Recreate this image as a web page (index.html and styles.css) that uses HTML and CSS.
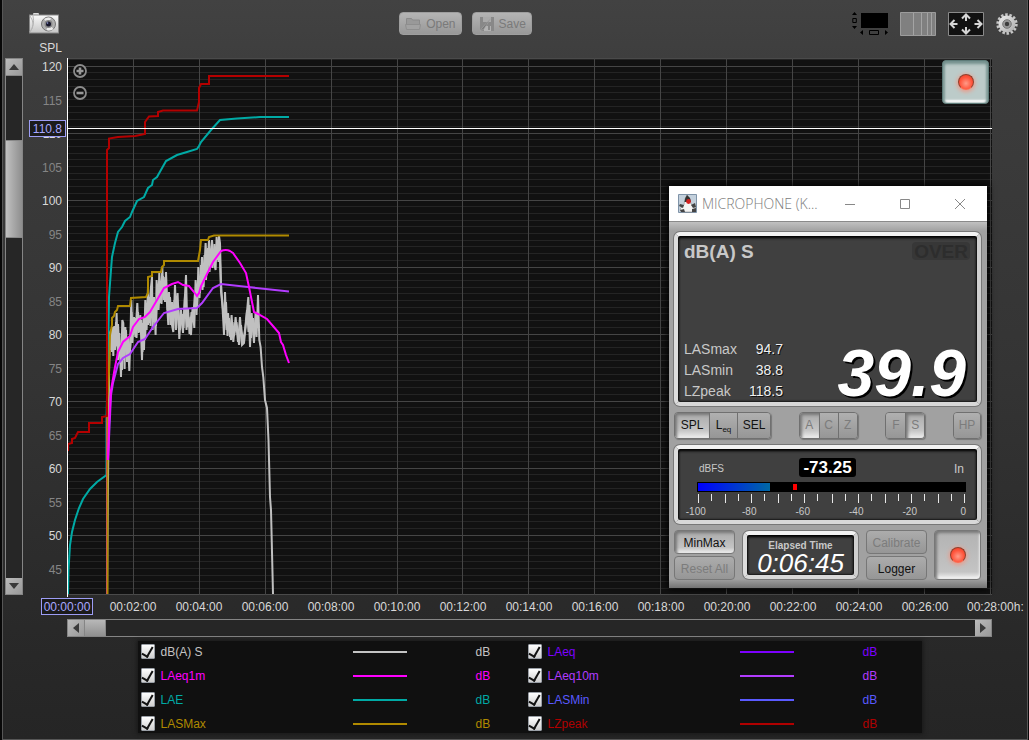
FILE: index.html
```html
<!DOCTYPE html>
<html lang="en">
<head>
<meta charset="utf-8">
<title>Sound level logger</title>
<link rel="stylesheet" href="styles.css">
</head>
<body>
<div class="app">
  <header class="toolbar">
    <button class="icon-btn" aria-label="Screenshot">
      <svg width="30" height="22" viewBox="0 0 30 22">
        <defs>
          <linearGradient id="cam" x1="0" y1="0" x2="0" y2="1"><stop offset="0" stop-color="#fafafa"/><stop offset="1" stop-color="#c4c4c4"/></linearGradient>
        </defs>
        <rect x="4" y="1" width="6" height="3" rx="1" fill="#ddd"/>
        <rect x=".5" y="3" width="29" height="18" fill="url(#cam)" stroke="#888"/>
        <path d="M1 4q6 8 0 16M4 4q2 9-3 16" fill="none" stroke="#b5b5b5"/>
        <circle cx="19.500" cy="12" r="7" fill="#b0b0b0" stroke="#777"/>
        <path d="M19.500 12L15 7a7 7 0 0 1 7-1zM19.500 12l5 5a7 7 0 0 1-7 1z" fill="#ececec"/>
        <circle cx="19.500" cy="12" r="4" fill="#888"/>
        <circle cx="19.500" cy="12" r="2.500" fill="#17172c"/>
        <circle cx="18.500" cy="11" r=".8" fill="#9aa4dd"/>
      </svg>
    </button>
    <span class="space-left"></span>
    <button class="file-btn" disabled>
      <svg width="16" height="14" viewBox="0 0 16 14"><path d="M1.500 7V1.500h5l1 1.500h7v4" fill="#999" stroke="#8a8a8a"/><path d="M.5 7.500h15l-1 5h-13z" fill="#a2a2a2" stroke="#8e8e8e"/></svg>
      Open
    </button>
    <button class="file-btn" disabled>
      <svg width="16" height="15" viewBox="0 0 16 15"><path d="M2 0h14v14H3l-1-1z" fill="#888"/><path d="M5 0h8v5H5z" fill="#aaa"/><path d="M6 9h7v5H6z" fill="#b2b2b2"/><path d="M10 9h2v4h-2z" fill="#888"/><path d="M13 1L4 11l-2 3 4-2z" fill="#777" stroke="#aaa" stroke-width=".6"/></svg>
      Save
    </button>
    <span class="space-right"></span>
    <button class="icon-btn" aria-label="Axis ranges">
      <svg width="36" height="24" viewBox="0 0 36 24"><path d="M9 1h27v15H9z" fill="#000"/><path d="M0 3l2.500-3L5 3zM0 14l2.500 3L5 14zM11 18v5l-3-2.500zM33 18v5l3-2.500z" fill="#000"/><path d="M.8 6.500h3.500v4H.8zM17.500 18.500h9v4h-9z" fill="none" stroke="#000"/></svg>
    </button>
    <button class="icon-btn" aria-label="Logarithmic grid">
      <svg width="36" height="24" viewBox="0 0 36 24"><path d="M.5.5h35v23H.5z" fill="#808080" stroke="#9c9c9c"/><path d="M13.500 1v22M21.500 1v22M27.500 1v22M31.500 1v22" stroke="#a4a4a4"/></svg>
    </button>
    <button class="icon-btn" aria-label="Fit view">
      <svg width="36" height="24" viewBox="0 0 36 24"><path d="M.5.5h35v23H.5z" fill="#111" stroke="#8a8a8a"/><path d="M18 3v6M18 15v6M3 12h6.500M33 12h-6.500M14 6.500l4-4 4 4M14 17.500l4 4 4-4M6.500 8l-4 4 4 4M29.500 8l4 4-4 4" fill="none" stroke="#d5d5d5" stroke-width="2"/></svg>
    </button>
    <button class="icon-btn" aria-label="Settings">
      <svg width="22" height="24" viewBox="0 0 22 24">
        <defs><linearGradient id="gr" x1="0" y1="0" x2="1" y2="1"><stop offset="0" stop-color="#efefef"/><stop offset="1" stop-color="#aaa"/></linearGradient></defs>
        <circle cx="11" cy="12" r="9.300" fill="none" stroke="#c6c6c6" stroke-width="2.800" stroke-dasharray="2.500 1.674"/>
        <circle cx="11" cy="12" r="8.500" fill="url(#gr)"/>
        <circle cx="11" cy="12" r="4.300" fill="#999" stroke="#777"/>
        <circle cx="11" cy="12" r="2.200" fill="#3c3c3c"/>
      </svg>
    </button>
  </header>

  <main class="chart">
    <div class="spl">SPL</div>
    <div class="scroll vertical">
      <button aria-label="Scroll up"><svg width="10" height="6" viewBox="0 0 10 6"><path d="M0 6l5-6 5 6z" fill="#3a3a3a"/></svg></button>
      <div class="track"><div class="thumb"></div></div>
      <button aria-label="Scroll down"><svg width="10" height="6" viewBox="0 0 10 6"><path d="M0 0l5 6 5-6z" fill="#3a3a3a"/></svg></button>
    </div>
    <div class="y-axis">
      <span>120</span><span class="dim">115</span><span>110</span><span class="dim">105</span><span>100</span><span class="dim">95</span><span>90</span><span class="dim">85</span><span>80</span><span class="dim">75</span><span>70</span><span class="dim">65</span><span>60</span><span class="dim">55</span><span>50</span><span class="dim">45</span>
      <output class="cursor-value">110.8</output>
    </div>
    <div class="plot">
      <svg class="graph" viewBox="67 58 925 537" preserveAspectRatio="none" fill="none">
        <g id="grid" shape-rendering="crispEdges"></g>
        <path stroke="#c0c0c0" stroke-width="2" d="M107 594L109 373L110 333L111 330L111.600 350L112.600 327L113.300 356L114.300 326L115.300 347L116.600 313L118 360L119.300 333L121 377L122.300 320L123.300 323L124.600 369L125.300 327L126.600 343L128 343L129.300 371L130.300 340L131.300 300L132.300 343L134 317L135.300 337L137.300 303L138.600 333L140.300 315L142 360L143 323L144 350L145.300 300L146.600 330L148 287L149.300 323L151 287L152 277L152.600 330L154 297L155.600 335L156.600 280L158.300 303L159.300 273L161 303L162.300 267L163.600 300L165.300 277L167 303L168.300 325L170 297L171.600 323L173.300 332L175 285L176.300 320L177.600 293L179.300 339L181 310L183 333L184.600 303L186 275L187.300 327L188.600 317L191 335L192.600 307L194.300 328L195.600 280L197.300 307L198.300 267L200 293L202 257L203.600 287L205.600 243L207.300 273L209 240L210.600 267L212 240L214 263L215.600 270L216.600 237L218 260L219 236L220 243L221 283L222.300 303L224 335L225 292L226.600 330L228 313L230 337L231.600 315L233.300 342L235.600 317L238 342L240 317L242 345L244 343L246 323L248.300 297L250 347L251.600 313L254 343L255.600 312L256.600 337L258 295L259.300 340L260.600 347L262 367L263.300 377L265 400L267 408L268.500 440L270 497L271 510L273 594"/>
        <path stroke="#c0c0c0" stroke-width="2" d="M110 350L111 338L112 352L113 333L115 350L116 322L117 346L118 324L119.500 352L120.500 345L122 370L123 340L124 360L126 330L127 362L128 338L129.500 355L130.500 345L131.500 312L133 335L135 318L136.500 338L138 312L139.500 332L141 320L142.500 352L143.500 318L145 340L146.500 308L148 325L149 297L150.500 326L151.500 293L153 322L155 303L156 326L157.500 288L158.500 310L160.500 282L161.500 304L163 276L165 302L166 272L167.500 310L169 292L170.500 325L172 302L173 322L174.500 300L176 330L178 305L180 330L182 314L183.500 328L185 296L186.500 330L188 308L189.500 334L191.500 312L193 322L195 292L196.500 315L198 280L199.500 298L201 265L202.500 290L204.500 255L206 280L208 248L209.500 272L211 250L212.500 268L214.500 244L215.500 262L217 243L218.500 262L219.500 245L221 292L223 310L224.500 322L226 302L227.500 336L229 318L231 340L232.500 322L234 336L236.500 322L239 345L241 325L243 343L245 330L247 310L248.500 332L249.500 305L251 338L253 318L255 334L257 315L259 328"/>
        <path stroke="#00aaa5" stroke-width="2" d="M68 594L68.500 570L70 545L72 532L75 520L79 508L83 499L90 489L97 482L106.500 475V420L108.500 330L109 297L111 270L112 257L115 243L118 232L122 227L125 221L130 217L132 212L137 201L144 197L148 188L152 185L153 180L157 177L166 161L177 155L187 152L197 149L199 146L201 142L211 130L220 120L237 118.500L260 117L289 117"/>
        <path stroke="#b08a00" stroke-width="2" d="M107.500 594V400L109 372L110 335L112 325V318L114 316L115 312L117 310L118 306H130L131 298L146 297L148 293V277L152 276V272H161L162 267L164 265V261H198L200 250L201 240H208L209 237L214 235.500H289"/>
        <path stroke="#b23cff" stroke-width="2" d="M108 460L111 395L113 383L118 364L123 358L130 354L138 342L145 339L153 327L164 313L178 309L197 308L202 303L213 288L221 284L248 287L289 291.500"/>
        <path stroke="#ff00ff" stroke-width="2" d="M108 460L109 425L111 390L115 367L118 352L123 342L130 336L133 327L139 319L145 317L150 312L157 300L164 288L172 284L178 282L183 285L189 286L194 292L197 296L199 293L201 286L207 274L213 262L221 251Q226 249 230 251L233 253L240 263L246 273L249 287L254 312L258 314L267 319L279 333L281 342L283 345L286 355L289 363"/>
        <path stroke="#c25a50" d="M106.500 594V417"/>
        <path stroke="#b40000" stroke-width="2" d="M68 451V444L72 443V439L75 438L78 432H89V423H102V417L107 416V150L109 148V138.500L118 137L135 136L145 134V122L149 116.500L158 116V112L163 110.500H197L199 102V88L201 84H209V76H289"/>
        <path stroke="#fff" d="M67 128.500H992" shape-rendering="crispEdges"/>
      </svg>
      <div class="zoom-tools">
        <button aria-label="Zoom in"><svg width="14" height="14" viewBox="0 0 14 14"><circle cx="7" cy="7" r="6" fill="#111" stroke="#8c8c8c" stroke-width="1.800"/><path d="M3.500 7h7M7 3.500v7" stroke="#999" stroke-width="2.600"/></svg></button>
        <button aria-label="Zoom out"><svg width="14" height="14" viewBox="0 0 14 14"><circle cx="7" cy="7" r="6" fill="#111" stroke="#8c8c8c" stroke-width="1.800"/><path d="M3.500 7h7" stroke="#999" stroke-width="2.600"/></svg></button>
      </div>
      <button class="record float" aria-label="Record"><span class="led"></span></button>
    </div>
    <div class="x-axis">
      <span><output class="cursor-time">00:00:00</output></span><span>00:02:00</span><span>00:04:00</span><span>00:06:00</span><span>00:08:00</span><span>00:10:00</span><span>00:12:00</span><span>00:14:00</span><span>00:16:00</span><span>00:18:00</span><span>00:20:00</span><span>00:22:00</span><span>00:24:00</span><span>00:26:00</span><span class="last">00:28:00h:</span>
    </div>
    <div class="scroll horizontal">
      <button aria-label="Scroll left"><svg width="6" height="10" viewBox="0 0 6 10"><path d="M6 0L0 5l6 5z" fill="#3a3a3a"/></svg></button>
      <div class="track"><div class="thumb"></div></div>
      <button aria-label="Scroll right"><svg width="6" height="10" viewBox="0 0 6 10"><path d="M0 0l6 5-6 5z" fill="#3a3a3a"/></svg></button>
    </div>
  </main>

  <footer class="legend-area">
    <div class="legend">
      <label class="series level"><input type="checkbox" checked><span>dB(A) S</span><i></i><span class="unit">dB</span></label>
      <label class="series leq"><input type="checkbox" checked><span>LAeq</span><i></i><span class="unit">dB</span></label>
      <label class="series leq1"><input type="checkbox" checked><span>LAeq1m</span><i></i><span class="unit">dB</span></label>
      <label class="series leq10"><input type="checkbox" checked><span>LAeq10m</span><i></i><span class="unit">dB</span></label>
      <label class="series lae"><input type="checkbox" checked><span>LAE</span><i></i><span class="unit">dB</span></label>
      <label class="series min"><input type="checkbox" checked><span>LASMin</span><i></i><span class="unit">dB</span></label>
      <label class="series max"><input type="checkbox" checked><span>LASMax</span><i></i><span class="unit">dB</span></label>
      <label class="series peak"><input type="checkbox" checked><span>LZpeak</span><i></i><span class="unit">dB</span></label>
    </div>
  </footer>
</div>

<section class="mic">
  <div class="titlebar">
    <svg width="19" height="19" viewBox="0 0 19 19"><path d="M.5.500h18v18H.5z" fill="#c3d0dc" stroke="#7f93a8"/><path d="M9 1l3 4 1 5 4 3v4l-2 1H4l-2-3 4-4q0-6 3-10z" fill="#f4f4f4" stroke="#888" stroke-width=".6"/><path d="M9 1l3 3 1 4H6.500q0-4 2.500-7z" fill="#333"/><path d="M2 10l4 1-1 3-4-2zM13 11l4-2 1 4-3 1zM2 16l4-1 1 3H3zM14 15l4-1v4h-4z" fill="#444"/><circle cx="10.500" cy="7.500" r="2.400" fill="#d32020"/></svg>
    <span class="title">MICROPHONE (K...</span>
    <button aria-label="Minimize"><svg width="10" height="10" viewBox="0 0 10 10"><path d="M0 5.500h10" stroke="#888"/></svg></button>
    <button aria-label="Maximize"><svg width="10" height="10" viewBox="0 0 10 10"><path d="M.5.500h9v9h-9z" fill="none" stroke="#888"/></svg></button>
    <button aria-label="Close"><svg width="10" height="10" viewBox="0 0 10 10"><path d="M0 0l10 10M10 0L0 10" stroke="#888"/></svg></button>
  </div>
  <div class="device">
    <div class="screen main-screen">
      <div class="screen-top"><strong>dB(A) S</strong><strong class="over">OVER</strong></div>
      <div class="readout">
        <dl>
          <dt>LASmax</dt><dd>94.7</dd>
          <dt>LASmin</dt><dd>38.8</dd>
          <dt>LZpeak</dt><dd>118.5</dd>
        </dl>
        <output class="digits">39.9</output>
      </div>
    </div>
    <div class="modes">
      <div class="group">
        <button class="w35 on">SPL</button><button class="w28">L<sub>eq</sub></button><button class="w34">SEL</button>
      </div>
      <div class="group">
        <button class="w20 on" disabled>A</button><button class="w20" disabled>C</button><button class="w20" disabled>Z</button>
      </div>
      <div class="group">
        <button class="w20" disabled>F</button><button class="w20 on" disabled>S</button>
      </div>
      <div class="group">
        <button class="w28" disabled>HP</button>
      </div>
    </div>
    <div class="screen meter">
      <div class="meter-head"><span>dBFS</span><output>-73.25</output><span class="in">In</span></div>
      <div class="bar"><div class="fill"></div><div class="peak-mark"></div></div>
      <svg class="ticks" viewBox="0 0 268 10" preserveAspectRatio="none" shape-rendering="crispEdges"></svg>
      <div class="scale"><span>-100</span><span>-80</span><span>-60</span><span>-40</span><span>-20</span><span>0</span></div>
    </div>
    <div class="controls">
      <div class="stack"><button class="on">MinMax</button><button disabled>Reset All</button></div>
      <div class="screen elapsed"><span>Elapsed Time</span><output>0:06:45</output></div>
      <div class="stack"><button disabled>Calibrate</button><button>Logger</button></div>
      <button class="record" aria-label="Record level"><span class="led"></span></button>
    </div>
  </div>
</section>
<script src="grid.js"></script>
</body>
</html>
```
FILE: styles.css
```css
* { box-sizing: border-box; }
body {
  margin: 0;
  min-height: 100vh;
  position: relative;
  background: #080808;
  font: 12px/16px "Liberation Sans", Arial, sans-serif;
  color: #d8d8d8;
}
button { font: inherit; padding: 0; margin: 0; border: 0; background: none; }
svg { display: block; }

.app {
  min-height: 100vh;
  margin: 0 1px 0 2px;
  border: solid #565656;
  border-width: 0 1px 1px 1px;
  background: linear-gradient(#424242, #3c3c3c 12%, #343434 50%, #292929 85%, #252525);
  display: flex;
  flex-direction: column;
}

.toolbar { display: flex; align-items: flex-start; height: 38px; padding: 12px 9px 0 26px; }
.toolbar .icon-btn + .icon-btn { margin-left: 12px; }
.space-left { flex: 17; }
.space-right { flex: 16; }
.file-btn {
  display: flex;
  align-items: center;
  gap: 5px;
  height: 23px;
  padding: 1px 5px 0 5px;
  border: 1px solid #9e9e9e;
  border-radius: 4px;
  background: linear-gradient(#b4b4b4, #989898);
  color: #7a7a7a;
}
.file-btn + .file-btn { margin-left: 10px; }

.chart {
  flex: 1;
  display: grid;
  grid-template-columns: 18px 44px 1fr;
  grid-template-rows: 20px 1fr 24px 18px;
  padding: 0 35px 0 2px;
}
.spl { grid-column: 1 / 3; padding: 2px 5px 0 0; text-align: right; }

.scroll { display: flex; border: 1px solid #858585; background: #262626; }
.scroll button { width: 16px; height: 16px; display: grid; place-items: center; background: linear-gradient(135deg, #bbb, #999); flex: none; }
.scroll .track { flex: 1; }
.vertical { flex-direction: column; grid-row: 2; grid-column: 1; }
.vertical button:first-child { border-bottom: 1px solid #858585; height: 17px; }
.vertical .track { padding-top: 64px; }
.vertical .thumb { height: 98px; background: linear-gradient(90deg, #c0c0c0, #8e8e8e); border: solid #888; border-width: 1px 0; }
.horizontal { grid-row: 4; grid-column: 3; }
.horizontal button:first-child { border-right: 1px solid #858585; width: 17px; }
.horizontal .track { display: flex; }
.horizontal .thumb { width: 21px; background: linear-gradient(#b8b8b8, #909090); border-right: 1px solid #888; }

.y-axis {
  grid-row: 2;
  grid-column: 2;
  position: relative;
  display: flex;
  flex-direction: column;
  justify-content: space-between;
  padding: 1px 5px 17px 0;
  text-align: right;
}
.dim { color: #858585; }
.cursor-value, .cursor-time { border: 1px solid #9d9df5; background: #1b1b1b; color: #a8a8ff; }
.cursor-value { position: absolute; top: 62px; right: 1px; width: 37px; height: 17px; line-height: 17px; padding-right: 3px; }

.plot { grid-row: 2; grid-column: 3; position: relative; min-height: 300px; background: #111; border: solid #4a4a4a; border-width: 1px 0 1px 0; }
.plot::before { content: ""; position: absolute; z-index: 1; left: 0; top: -1px; bottom: -3px; width: 1px; background: #fff; }
.graph { position: absolute; top: -1px; left: 0; width: 100%; height: calc(100% + 2px); }
.graph path { vector-effect: non-scaling-stroke; }
.zoom-tools { position: absolute; left: 6px; top: 5px; display: grid; gap: 8px; }

.x-axis {
  grid-row: 3;
  grid-column: 3;
  display: grid;
  grid-template-columns: repeat(15, 1fr);
  margin: 0 -32px 0 -33px;
  text-align: center;
  white-space: nowrap;
  padding-top: 4px;
}
.cursor-time { display: inline-block; height: 17px; margin-top: -1px; padding: 0 2px; }
.x-axis span { display: block; }
.x-axis .last { padding-left: 9px; text-align: left; }

.legend-area { padding: 4px 35px 6px 64px; }
.legend {
  display: grid;
  grid-template-columns: 1fr 1fr;
  grid-auto-rows: 24px;
  max-width: 784px;
  height: 92px;
  margin: 0 auto;
  padding: 0 7px 0 3px;
  background: #101010;
  box-shadow: 0 0 4px 1px #181818;
}
.series { display: grid; grid-template-columns: 14px 186px 54px 1fr; column-gap: 6px; align-items: center; height: 21px; }
.series input {
  appearance: none;
  margin: 0;
  width: 14px;
  height: 15px;
  border: 1px solid #9a9fa6;
  border-radius: 1px;
  background: linear-gradient(#fff, #cfcfcf);
  display: grid;
  place-items: center;
}
.series input:checked::before {
  content: "";
  width: 5px;
  height: 10px;
  border: solid #111;
  border-width: 0 2px 2px 0;
  transform: translateY(-1px) rotate(30deg);
}
.series i { height: 2px; background: currentColor; }
.unit { padding-left: 63px; }
.level { color: #c4c4c4; }
.leq { color: #7d00ff; }
.leq1 { color: #ff00ff; }
.leq10 { color: #b23cff; }
.lae { color: #00aaa5; }
.min { color: #5a5aff; }
.max { color: #b08a00; }
.peak { color: #b00000; }

.record {
  width: 47px;
  height: 50px;
  display: grid;
  place-items: center;
  border: 1px solid #777;
  border-radius: 4px;
  background: linear-gradient(#b2b2b2, #c4c4c4 85%, #f2f2f2);
  box-shadow: inset 2px 2px 3px #777, inset -1px -2px 2px #eee;
}
.record.float {
  position: absolute;
  top: 1px;
  right: 3px;
  height: 44px;
  border: 1px solid #5e7c79;
  background: #bccbc9;
  box-shadow: inset 0 3px 3px #74908d, inset 2px 0 2px #87a19e, inset -2px 0 2px #87a19e, inset 0 -3px 2px #fff;
}
.led {
  width: 16px;
  height: 16px;
  border: 1px solid #933c28;
  border-bottom-color: #ff6a4e;
  border-radius: 50%;
  background: radial-gradient(circle at 50% 60%, #ff9b88, #ff553c 55%, #e33a20);
  box-shadow: 0 1px 4px 1px #ee9a88;
}

/* Floating sound meter window */
.mic { position: absolute; left: 669px; top: 186px; width: 318px; background: #a1a1a1; box-shadow: 0 0 7px 1px #000; }
.titlebar { display: flex; align-items: center; height: 35px; padding: 0 0 0 9px; background: #fff; color: #7c7c7c; }
.title { flex: 1; margin-left: 5px; font: 300 14px/20px "Open Sans", sans-serif; white-space: nowrap; }
.titlebar button { width: 55px; height: 35px; display: grid; place-items: center; flex: none; }
.device {
  display: flex;
  flex-direction: column;
  gap: 6px;
  padding: 10px 6px 8px 5px;
  border-top: 1px solid #8a8a8a;
  background: linear-gradient(#c0c0c0, #a1a1a1 9px, #a1a1a1 calc(100% - 9px), #737373);
}
.screen {
  border: 4px solid;
  border-color: #f2f2f2 #cfcfcf #d8d8d8 #dcdcdc;
  border-radius: 6px;
  background: #404040;
  box-shadow: 0 0 0 1px #777, inset 0 2px 3px #000, inset 0 0 2px 1px #181818;
  color: #c8c8c8;
}
.main-screen { height: 174px; display: flex; flex-direction: column; justify-content: space-between; padding: 6px 7px 0 6px; }
.screen-top { display: flex; justify-content: space-between; font-size: 19px; line-height: 20px; }
.screen-top .over { height: 18px; line-height: 19px; padding: 0 2px; border-radius: 4px; background: #373737; color: #2d2d2d; }
.readout { display: flex; justify-content: space-between; align-items: flex-end; }
dl { margin: 0; display: grid; grid-template-columns: 1fr auto; width: 99px; font-size: 14px; line-height: 21px; }
dt, dd { position: static; }
dd { margin: 0; text-align: right; color: #f0f0f0; text-shadow: 1px 1px #111; }
.digits { font: italic bold 66px/58px "Liberation Sans", Arial, sans-serif; color: #fff; text-shadow: 2px 2px #000; padding-right: 4px; }

.modes { display: flex; justify-content: space-between; }
.group { display: flex; height: 27px; border: 1px solid #707070; border-radius: 4px; overflow: hidden; box-shadow: 1px 1px 1px #777; }
.group button { background: linear-gradient(#b0b0b0, #969696); color: #111; border-left: 1px solid #707070; line-height: 25px; }
.group button:first-child { border-left: 0; }
.group button:disabled, .stack button:disabled { color: #7c7c7c; }
.group .on, .group .on:disabled { background: linear-gradient(#aaa, #c6c6c6 70%, #eee); box-shadow: inset 2px 2px 3px #777; }
.group sub { font-size: 8px; line-height: 8px; }
.w35 { width: 34px; }
.w34 { width: 33px; }
.w28 { width: 28px; }
.w20 { width: 19px; }
.group .w28:only-child { width: 26px; }

.meter { height: 79px; padding: 7px 11px 0 19px; }
.meter-head { display: grid; grid-template-columns: 1fr auto 1fr; align-items: center; font-size: 10px; height: 22px; }
.meter-head output { margin-right: 8px; padding: 0 4px; border-radius: 3px; background: #000; color: #fff; font-weight: bold; font-size: 17px; line-height: 19px; }
.meter-head span { padding: 3px 2px 0; }
.meter-head .in { text-align: right; font-size: 12px; }
.bar { display: flex; height: 10px; margin-top: 4px; background: #000; padding: 1px; }
.fill { width: 27%; background: linear-gradient(90deg, #0000ff, #0069a5); }
.peak-mark { width: 4px; height: 6px; margin: 1px 0 0 23px; background: #f00; }
.ticks { width: 100%; height: 10px; margin-top: 2px; }
.scale { display: grid; grid-template-columns: repeat(6, 1fr); margin: 3px -24px 0 -28px; text-align: center; font-size: 10px; line-height: 10px; }

.controls { display: flex; justify-content: space-between; height: 50px; }
.stack { display: flex; flex-direction: column; justify-content: space-between; width: 61px; }
.stack button { height: 24px; padding-top: 1px; border: 1px solid #777; border-radius: 4px; background: linear-gradient(#acacac, #969696); color: #111; }
.stack .on { background: linear-gradient(#aaa, #c4c4c4 75%, #eee); box-shadow: inset 2px 2px 3px #777; }
.elapsed { width: 115px; display: flex; flex-direction: column; align-items: center; margin: 1px; padding-top: 5px; font-weight: bold; font-size: 10px; line-height: 12px; }
.elapsed output { font: italic 26px/22px "Liberation Sans", sans-serif; color: #fff; }
```
FILE: grid.js
```js
const NS = "http://www.w3.org/2000/svg";
function addPath(parent, d, stroke) {
  const path = document.createElementNS(NS, "path");
  path.setAttribute("d", d);
  path.setAttribute("stroke", stroke);
  parent.appendChild(path);
}

const grid = document.getElementById("grid");
let minor = "";
let major = "";
for (let db = 121; db >= 42; db--) {
  const line = `M67 ${Math.floor(66 + (120 - db) * 6.7) + 0.5}H992`;
  if (db % 10 === 0) major += line;
  else minor += line;
}
for (let i = 1; i <= 14; i++) major += `M${Math.round(67 + i * 65.9) + 0.5} 58V595`;
addPath(grid, minor, "#242424");
addPath(grid, major, "#454545");

const ticks = document.querySelector(".ticks");
let marks = "";
for (let i = 0; i <= 20; i++) marks += `M${1.5 + Math.round(i * 13.25)} 0V${i % 2 ? 7 : 9}`;
addPath(ticks, marks, "#e8e8e8");
```
